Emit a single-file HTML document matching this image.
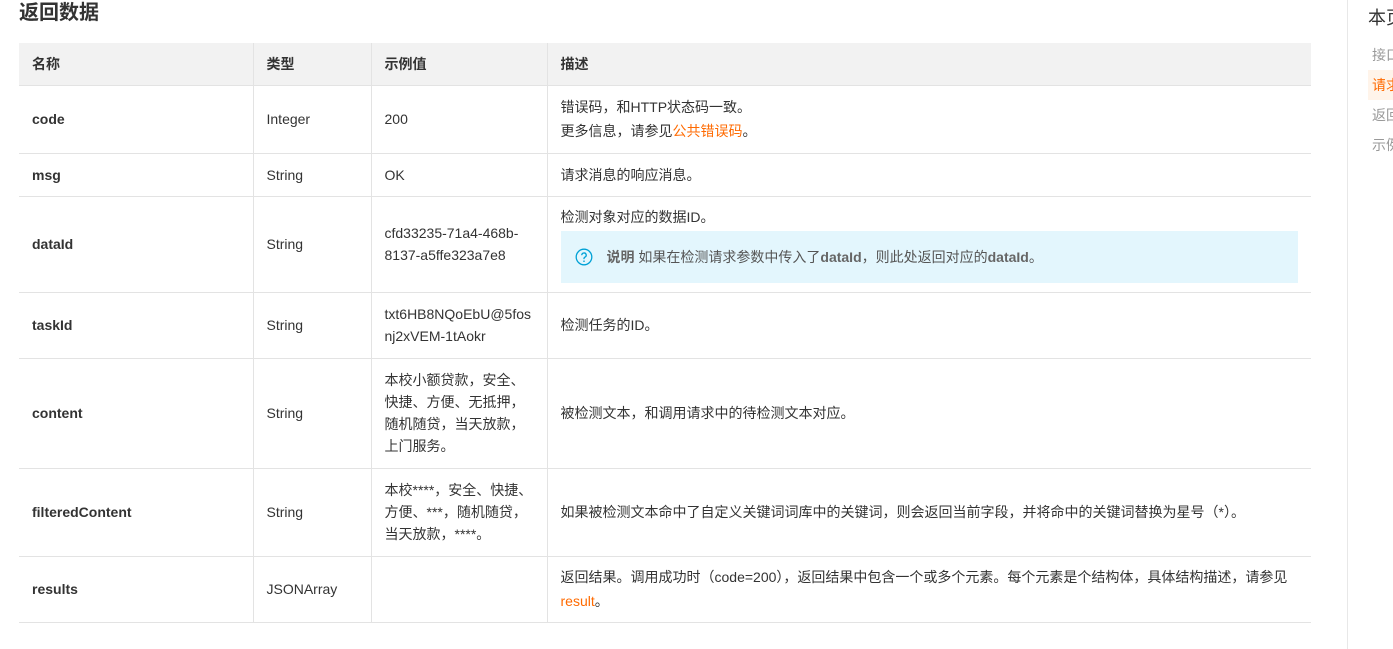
<!DOCTYPE html>
<html><head><meta charset="utf-8"><style>
*{margin:0;padding:0;box-sizing:border-box}
body{width:1393px;height:649px;overflow:hidden;background:#fff;font-family:"Liberation Sans","Noto Sans CJK SC",sans-serif;color:#333;font-size:14px;position:relative}
h2{position:absolute;left:19px;top:0;font-size:20px;font-weight:bold;color:#333;line-height:26px}
table{position:absolute;left:19px;top:43px;width:1292px;border-collapse:collapse;table-layout:fixed}
td,th{border-bottom:1px solid #e3e3e3;border-right:1px solid #e3e3e3;padding:0 13px;vertical-align:middle;text-align:left;line-height:22px}
td:last-child,th:last-child{border-right:none}
th{background:#f2f2f2;font-weight:bold;height:42px}
td:first-child{font-weight:bold}
.d{line-height:24px}
.o{color:#ff6a00}
.note{background:#e3f6fd;margin-top:3px;padding:14px 14px;color:#555;line-height:24px;display:flex;align-items:center}
.note b{color:#666}
.side{position:absolute;left:1347px;top:0;width:1px;height:649px;background:#e8e8e8}
.toc{position:absolute;left:1368px;top:4px;font-size:18px;color:#333;white-space:nowrap}
.ti{position:absolute;left:1368px;width:30px;height:30px;font-size:14px;color:#999;padding-left:4px;line-height:30px;white-space:nowrap;overflow:hidden}
</style></head><body>
<h2>返回数据</h2>
<table>
<colgroup><col style="width:234px"><col style="width:118px"><col style="width:176px"><col></colgroup>
<tr><th>名称</th><th>类型</th><th>示例值</th><th>描述</th></tr>
<tr style="height:68px"><td>code</td><td>Integer</td><td>200</td><td class="d">错误码，和HTTP状态码一致。<br>更多信息，请参见<span class="o">公共错误码</span>。</td></tr>
<tr style="height:43px"><td>msg</td><td>String</td><td>OK</td><td>请求消息的响应消息。</td></tr>
<tr style="height:96px"><td>dataId</td><td>String</td><td>cfd33235-71a4-468b-8137-a5ffe323a7e8</td><td>检测对象对应的数据ID。<div class="note"><svg width="18" height="18" viewBox="0 0 18 18" style="margin-right:14px"><circle cx="9" cy="9" r="7.8" fill="none" stroke="#00a1d6" stroke-width="1.3"/><path d="M6.8 7.2a2.2 2.2 0 1 1 3 2c-.6.3-.8.6-.8 1.3v.6" fill="none" stroke="#00a1d6" stroke-width="1.3"/><circle cx="9" cy="13.2" r=".8" fill="#00a1d6"/></svg><span><b>说明</b> 如果在检测请求参数中传入了<b>dataId</b>，则此处返回对应的<b>dataId</b>。</span></div></td></tr>
<tr style="height:66px"><td>taskId</td><td>String</td><td style="word-break:break-all">txt6HB8NQoEbU@5fosnj2xVEM-1tAokr</td><td>检测任务的ID。</td></tr>
<tr style="height:110px"><td>content</td><td>String</td><td>本校小额贷款，安全、快捷、方便、无抵押，随机随贷，当天放款，上门服务。</td><td>被检测文本，和调用请求中的待检测文本对应。</td></tr>
<tr style="height:88px"><td>filteredContent</td><td>String</td><td>本校****，安全、快捷、方便、***，随机随贷，当天放款，****。</td><td>如果被检测文本命中了自定义关键词词库中的关键词，则会返回当前字段，并将命中的关键词替换为星号（*）。</td></tr>
<tr style="height:66px"><td>results</td><td>JSONArray</td><td></td><td class="d">返回结果。调用成功时（code=200），返回结果中包含一个或多个元素。每个元素是个结构体，具体结构描述，请参见<span class="o">result</span>。</td></tr>
</table>
<div class="side"></div>
<div class="toc">本页</div>
<div class="ti" style="top:40px">接口</div>
<div class="ti" style="top:70px;background:#fff4ea;color:#ff6a00;left:1368px;width:30px">请求</div>
<div class="ti" style="top:100px">返回</div>
<div class="ti" style="top:130px">示例</div>
</body></html>
